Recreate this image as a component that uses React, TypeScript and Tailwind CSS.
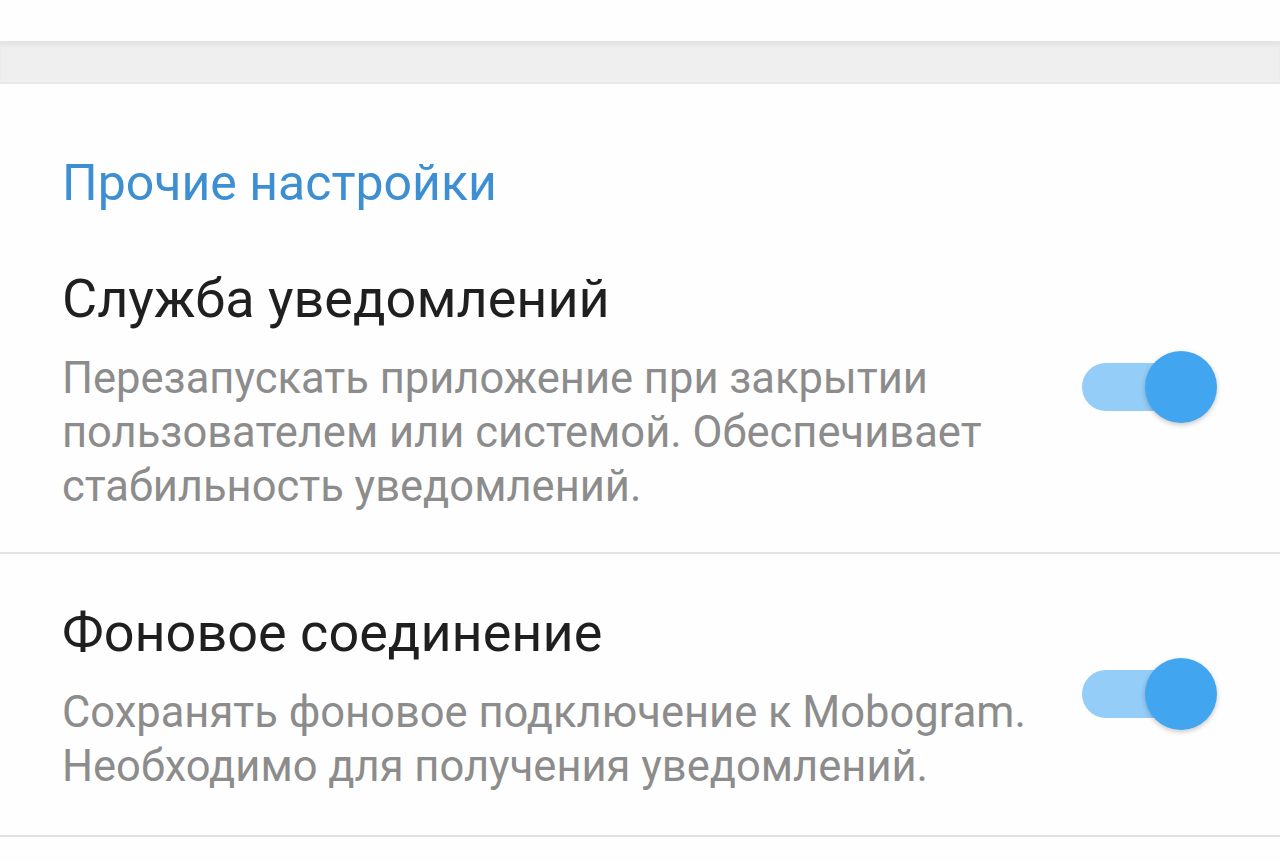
import React from "react";

function Toggle() {
  return (
    <div className="relative w-[135px] h-[72px] shrink-0 -mt-[8px]">
      <div className="absolute left-0 top-[12px] w-[118px] h-[48px] rounded-full bg-[#93cdf8]" />
      <div className="absolute right-0 top-0 w-[72px] h-[72px] rounded-full bg-[#42a5f0] shadow-[0_2px_5px_rgba(0,0,0,0.22)]" />
    </div>
  );
}

function SettingRow({ title, desc, className }: { title: string; desc: string[]; className: string }) {
  return (
    <div className={`flex items-center justify-between pl-[62px] pr-[63px] border-b-2 border-[#e2e2e2] ${className}`}>
      <div>
        <div className="text-[54px] leading-[64px] text-[#1f1f1f]">{title}</div>
        <div className="mt-[21px] text-[43.5px] leading-[54px] text-[#8c8c8c]">
          {desc.map((line) => (
            <div key={line} className="whitespace-nowrap">{line}</div>
          ))}
        </div>
      </div>
      <Toggle />
    </div>
  );
}

export default function App() {
  return (
    <div className="w-[1280px] h-[861px] overflow-hidden bg-[#fefefe] font-['Roboto',sans-serif]">
      <div className="h-[41px]" />
      <div className="h-[43px] bg-[#efefef] border-t-2 border-b-2 border-t-[#e3e3e3] border-b-[#e8e8e8] shadow-[inset_0_3px_3px_rgba(0,0,0,0.04)]" />

      <div className="pl-[62px] pt-[69px] text-[50px] leading-[60px] text-[#3d8fd2]">
        Прочие настройки
      </div>

      <SettingRow
        className="pt-[54px] pb-[38px]"
        title="Служба уведомлений"
        desc={[
          "Перезапускать приложение при закрытии",
          "пользователем или системой. Обеспечивает",
          "стабильность уведомлений.",
        ]}
      />
      <SettingRow
        className="pt-[47px] pb-[41px]"
        title="Фоновое соединение"
        desc={[
          "Сохранять фоновое подключение к Mobogram.",
          "Необходимо для получения уведомлений.",
        ]}
      />
    </div>
  );
}
